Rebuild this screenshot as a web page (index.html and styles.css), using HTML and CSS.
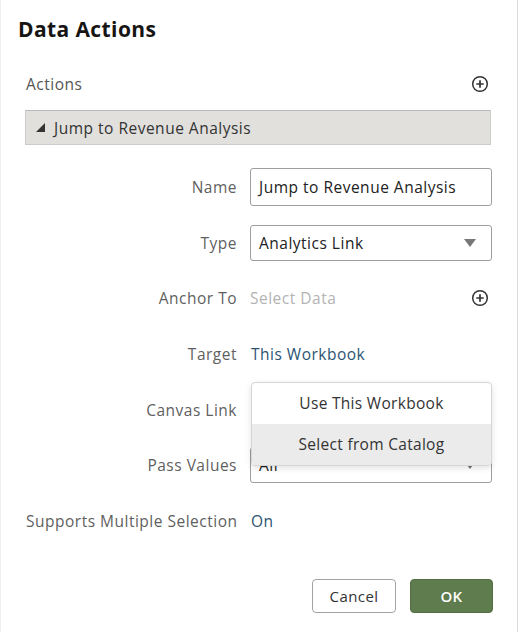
FILE: index.html
```html
<!DOCTYPE html>
<html>
<head>
<meta charset="utf-8">
<link rel="stylesheet" href="styles.css">
</head>
<body>
<div class="dialog">
  <h1 class="title">Data Actions</h1>
  <div class="section-head">
    <span class="section-label">Actions</span>
    <svg class="plus" width="18" height="18" viewBox="0 0 18 18"><circle cx="9" cy="9" r="7.3" fill="none" stroke="#333" stroke-width="1.5"/><path d="M9 5.3v7.4M5.3 9h7.4" stroke="#333" stroke-width="1.7"/></svg>
  </div>
  <div class="action-bar">
    <svg class="tri" width="11" height="11" viewBox="0 0 11 11"><path d="M10 1V10H1z" fill="#333"/></svg>
    <span>Jump to Revenue Analysis</span>
  </div>
  <div class="form">
    <div class="label">Name</div>
    <div class="value"><div class="input">Jump to Revenue Analysis</div></div>

    <div class="label">Type</div>
    <div class="value"><div class="input select">Analytics Link<span class="caret"></span></div></div>

    <div class="label">Anchor To</div>
    <div class="value row-plus"><span class="placeholder">Select Data</span>
      <svg class="plus" width="18" height="18" viewBox="0 0 18 18"><circle cx="9" cy="9" r="7.3" fill="none" stroke="#333" stroke-width="1.5"/><path d="M9 5.3v7.4M5.3 9h7.4" stroke="#333" stroke-width="1.7"/></svg>
    </div>

    <div class="label">Target</div>
    <div class="value"><span class="link">This Workbook</span></div>

    <div class="label">Canvas Link</div>
    <div class="value menu-anchor">
      <div class="menu">
        <div class="menu-item">Use This Workbook</div>
        <div class="menu-item hover">Select from Catalog</div>
      </div>
    </div>

    <div class="label">Pass Values</div>
    <div class="value"><div class="input select">All<span class="caret small"></span></div></div>

    <div class="label">Supports Multiple Selection</div>
    <div class="value"><span class="link">On</span></div>
  </div>
  <div class="footer">
    <button class="btn cancel">Cancel</button>
    <button class="btn ok">OK</button>
  </div>
</div>
</body>
</html>
```
FILE: styles.css
```css
html, body {
  margin: 0;
  padding: 0;
  background: #fff;
}
body {
  font-family: "Open Sans", "Noto Sans", sans-serif;
  font-size: 15.5px;
  letter-spacing: 0.5px;
  color: #333;
}
.dialog {
  width: 518px;
  height: 632px;
  box-sizing: border-box;
  border-right: 1px solid #dcdcdc;
  border-left: 1px solid #f0f0f0;
  padding: 14px 25px 0 17px;
  position: relative;
}
.title {
  margin: 0;
  font-size: 21px;
  font-weight: 700;
  color: #161513;
  line-height: 30px;
  letter-spacing: 0.4px;
}
.section-head {
  margin-top: 29px;
  margin-left: 8px;
  display: flex;
  align-items: center;
  justify-content: space-between;
  padding-right: 3px;
  height: 22px;
}
.section-label {
  color: #555;
}
.action-bar {
  margin-top: 15px;
  margin-left: 7px;
  margin-right: 1px;
  height: 35px;
  box-sizing: border-box;
  background: #e1e0dd;
  border: 1px solid #cbcbcb;
  border-top-color: #b9b9b9;
  display: flex;
  align-items: center;
  padding-left: 9px;
  gap: 8px;
  color: #333;
}
.tri { display: block; }
.form {
  margin-top: 23px;
  margin-left: 8px;
  display: grid;
  grid-template-columns: 211px 242px;
  column-gap: 13px;
  grid-auto-rows: 38px;
  row-gap: 17.7px;
  align-items: center;
}
.label {
  text-align: right;
  color: #5f5f5f;
  white-space: nowrap;
}
.value {
  height: 38px;
  display: flex;
  align-items: center;
}
.input {
  width: 100%;
  height: 38px;
  box-sizing: border-box;
  border: 1px solid #9e9e9e;
  border-radius: 3px;
  padding: 0 8px;
  display: flex;
  align-items: center;
  color: #222;
  background: #fff;
}
.select {
  height: 36px;
  justify-content: space-between;
}
.caret {
  width: 0;
  height: 0;
  border-left: 6px solid transparent;
  border-right: 6px solid transparent;
  border-top: 8px solid #777;
  margin-right: 7px;
}
.row-plus {
  justify-content: space-between;
  padding-right: 3px;
}
.placeholder {
  color: #b3b3b3;
}
.link {
  color: #2c5372;
  padding-left: 1px;
}
.menu-anchor {
  position: relative;
}
.menu {
  position: absolute;
  left: 1px;
  right: 0;
  top: -9px;
  background: #fff;
  border: 1px solid #d6d6d6;
  border-radius: 4px;
  box-shadow: 0 2px 6px rgba(0,0,0,0.12);
  z-index: 2;
  overflow: hidden;
}
.menu-item {
  height: 41px;
  display: flex;
  align-items: center;
  justify-content: center;
  color: #333;
  font-size: 15.5px;
  letter-spacing: 0.3px;
}
.menu-item.hover {
  background: #ebebeb;
}
.footer {
  position: absolute;
  right: 24px;
  top: 579px;
  display: flex;
  gap: 14px;
}
.btn {
  font-family: inherit;
  font-size: 15px;
  letter-spacing: 0.4px;
  height: 34px;
  border-radius: 4px;
  cursor: pointer;
}
.cancel {
  width: 84px;
  background: #fff;
  border: 1px solid #a3a3a3;
  color: #333;
}
.ok {
  width: 83px;
  background: #5e7c4d;
  border: 1px solid #556f45;
  color: #fff;
  font-weight: 600;
}
```
